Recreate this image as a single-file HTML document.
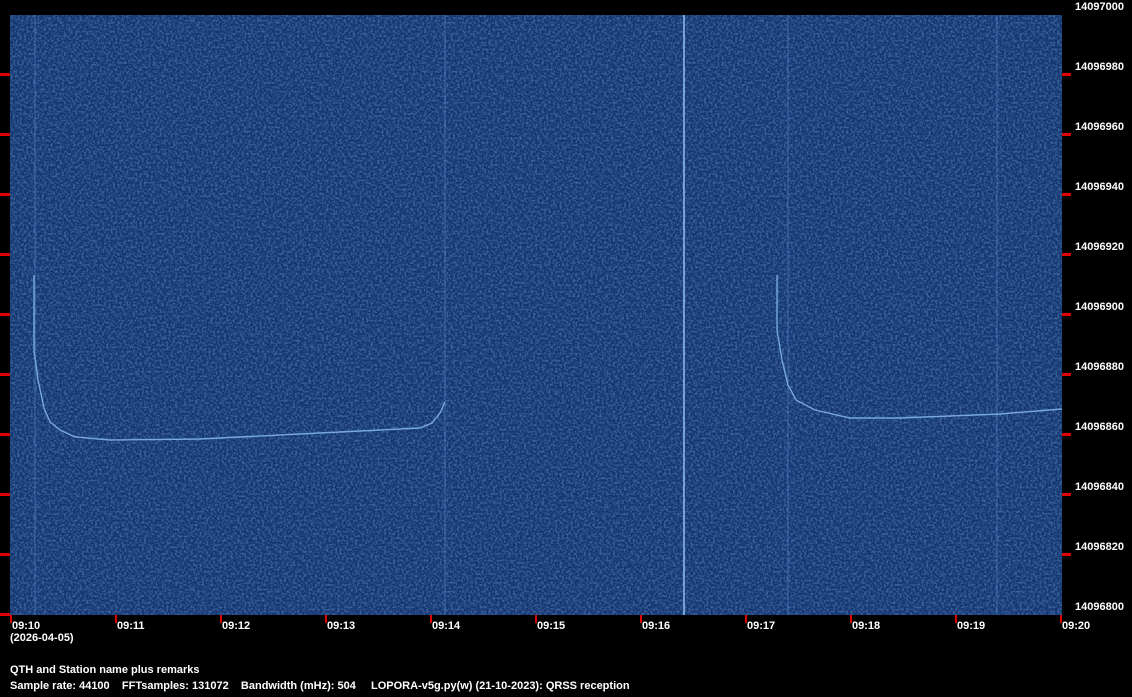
<!DOCTYPE html><html><head><style>
body{margin:0;background:#000;width:1132px;height:697px;overflow:hidden;position:relative;font-family:"Liberation Sans",sans-serif;font-weight:bold;font-size:11px;color:#fff}
.t{position:absolute;white-space:pre;line-height:12px}
</style></head><body>
<svg width="1132" height="697" style="position:absolute;left:0;top:0">
<defs><filter id="n" x="0" y="0" width="100%" height="100%"><feTurbulence type="fractalNoise" baseFrequency="0.45" numOctaves="2" seed="3"/><feColorMatrix type="matrix" values="0 0 0 0 0.16  0 0 0 0 0.33  0 0 0 0 0.62  0 0 0 3 -1.2"/></filter></defs>
<rect x="10" y="15" width="1052" height="600" fill="#143672"/>
<rect x="10" y="15" width="1052" height="600" filter="url(#n)" opacity="0.45"/>
<g stroke="#5e90d0" fill="none" stroke-width="1.2" opacity="0.45">
<line x1="35" y1="15" x2="35" y2="615"/><line x1="445" y1="15" x2="445" y2="615"/><line x1="788" y1="15" x2="788" y2="615"/><line x1="997" y1="15" x2="997" y2="615"/>
</g>
<line x1="684" y1="15" x2="684" y2="615" stroke="#8ab8ea" stroke-width="1.6"/>
<g stroke="#78a8de" fill="none" stroke-width="1.4">
<polyline points="34,275 34,350 38,380 44,408 50,422 60,430 75,437 110,440 200,439 300,434 380,430 420,428 432,423 440,413 445,402"/>
<polyline points="777,275 777,330 782,360 788,385 796,400 815,410 850,418 900,418 1000,414 1062,409"/>
</g>
<g fill="#e00000">
<rect x="0" y="73" width="10" height="3"/><rect x="0" y="133" width="10" height="3"/><rect x="0" y="193" width="10" height="3"/><rect x="0" y="253" width="10" height="3"/><rect x="0" y="313" width="10" height="3"/><rect x="0" y="373" width="10" height="3"/><rect x="0" y="433" width="10" height="3"/><rect x="0" y="493" width="10" height="3"/><rect x="0" y="553" width="10" height="3"/><rect x="0" y="613" width="10" height="3"/>
<rect x="1062" y="73" width="9" height="3"/><rect x="1062" y="133" width="9" height="3"/><rect x="1062" y="193" width="9" height="3"/><rect x="1062" y="253" width="9" height="3"/><rect x="1062" y="313" width="9" height="3"/><rect x="1062" y="373" width="9" height="3"/><rect x="1062" y="433" width="9" height="3"/><rect x="1062" y="493" width="9" height="3"/><rect x="1062" y="553" width="9" height="3"/>
<rect x="10" y="615" width="2" height="8"/><rect x="115" y="615" width="2" height="8"/><rect x="220" y="615" width="2" height="8"/><rect x="325" y="615" width="2" height="8"/><rect x="430" y="615" width="2" height="8"/><rect x="535" y="615" width="2" height="8"/><rect x="640" y="615" width="2" height="8"/><rect x="745" y="615" width="2" height="8"/><rect x="850" y="615" width="2" height="8"/><rect x="955" y="615" width="2" height="8"/><rect x="1060" y="615" width="2" height="8"/>
</g>
</svg>
<div class="t" style="left:1075px;top:1px">14097000</div>
<div class="t" style="left:1075px;top:61px">14096980</div>
<div class="t" style="left:1075px;top:121px">14096960</div>
<div class="t" style="left:1075px;top:181px">14096940</div>
<div class="t" style="left:1075px;top:241px">14096920</div>
<div class="t" style="left:1075px;top:301px">14096900</div>
<div class="t" style="left:1075px;top:361px">14096880</div>
<div class="t" style="left:1075px;top:421px">14096860</div>
<div class="t" style="left:1075px;top:481px">14096840</div>
<div class="t" style="left:1075px;top:541px">14096820</div>
<div class="t" style="left:1075px;top:601px">14096800</div>
<div class="t" style="left:12px;top:620px">09:10</div>
<div class="t" style="left:117px;top:620px">09:11</div>
<div class="t" style="left:222px;top:620px">09:12</div>
<div class="t" style="left:327px;top:620px">09:13</div>
<div class="t" style="left:432px;top:620px">09:14</div>
<div class="t" style="left:537px;top:620px">09:15</div>
<div class="t" style="left:642px;top:620px">09:16</div>
<div class="t" style="left:747px;top:620px">09:17</div>
<div class="t" style="left:852px;top:620px">09:18</div>
<div class="t" style="left:957px;top:620px">09:19</div>
<div class="t" style="left:1062px;top:620px">09:20</div>
<div class="t" style="left:10px;top:632px">(2026-04-05)</div>
<div class="t" style="left:10px;top:664px">QTH and Station name plus remarks</div>
<div class="t" style="left:10px;top:680px">Sample rate: 44100    FFTsamples: 131072    Bandwidth (mHz): 504</div>
<div class="t" style="left:371px;top:680px">LOPORA-v5g.py(w) (21-10-2023): QRSS reception</div>
</body></html>
